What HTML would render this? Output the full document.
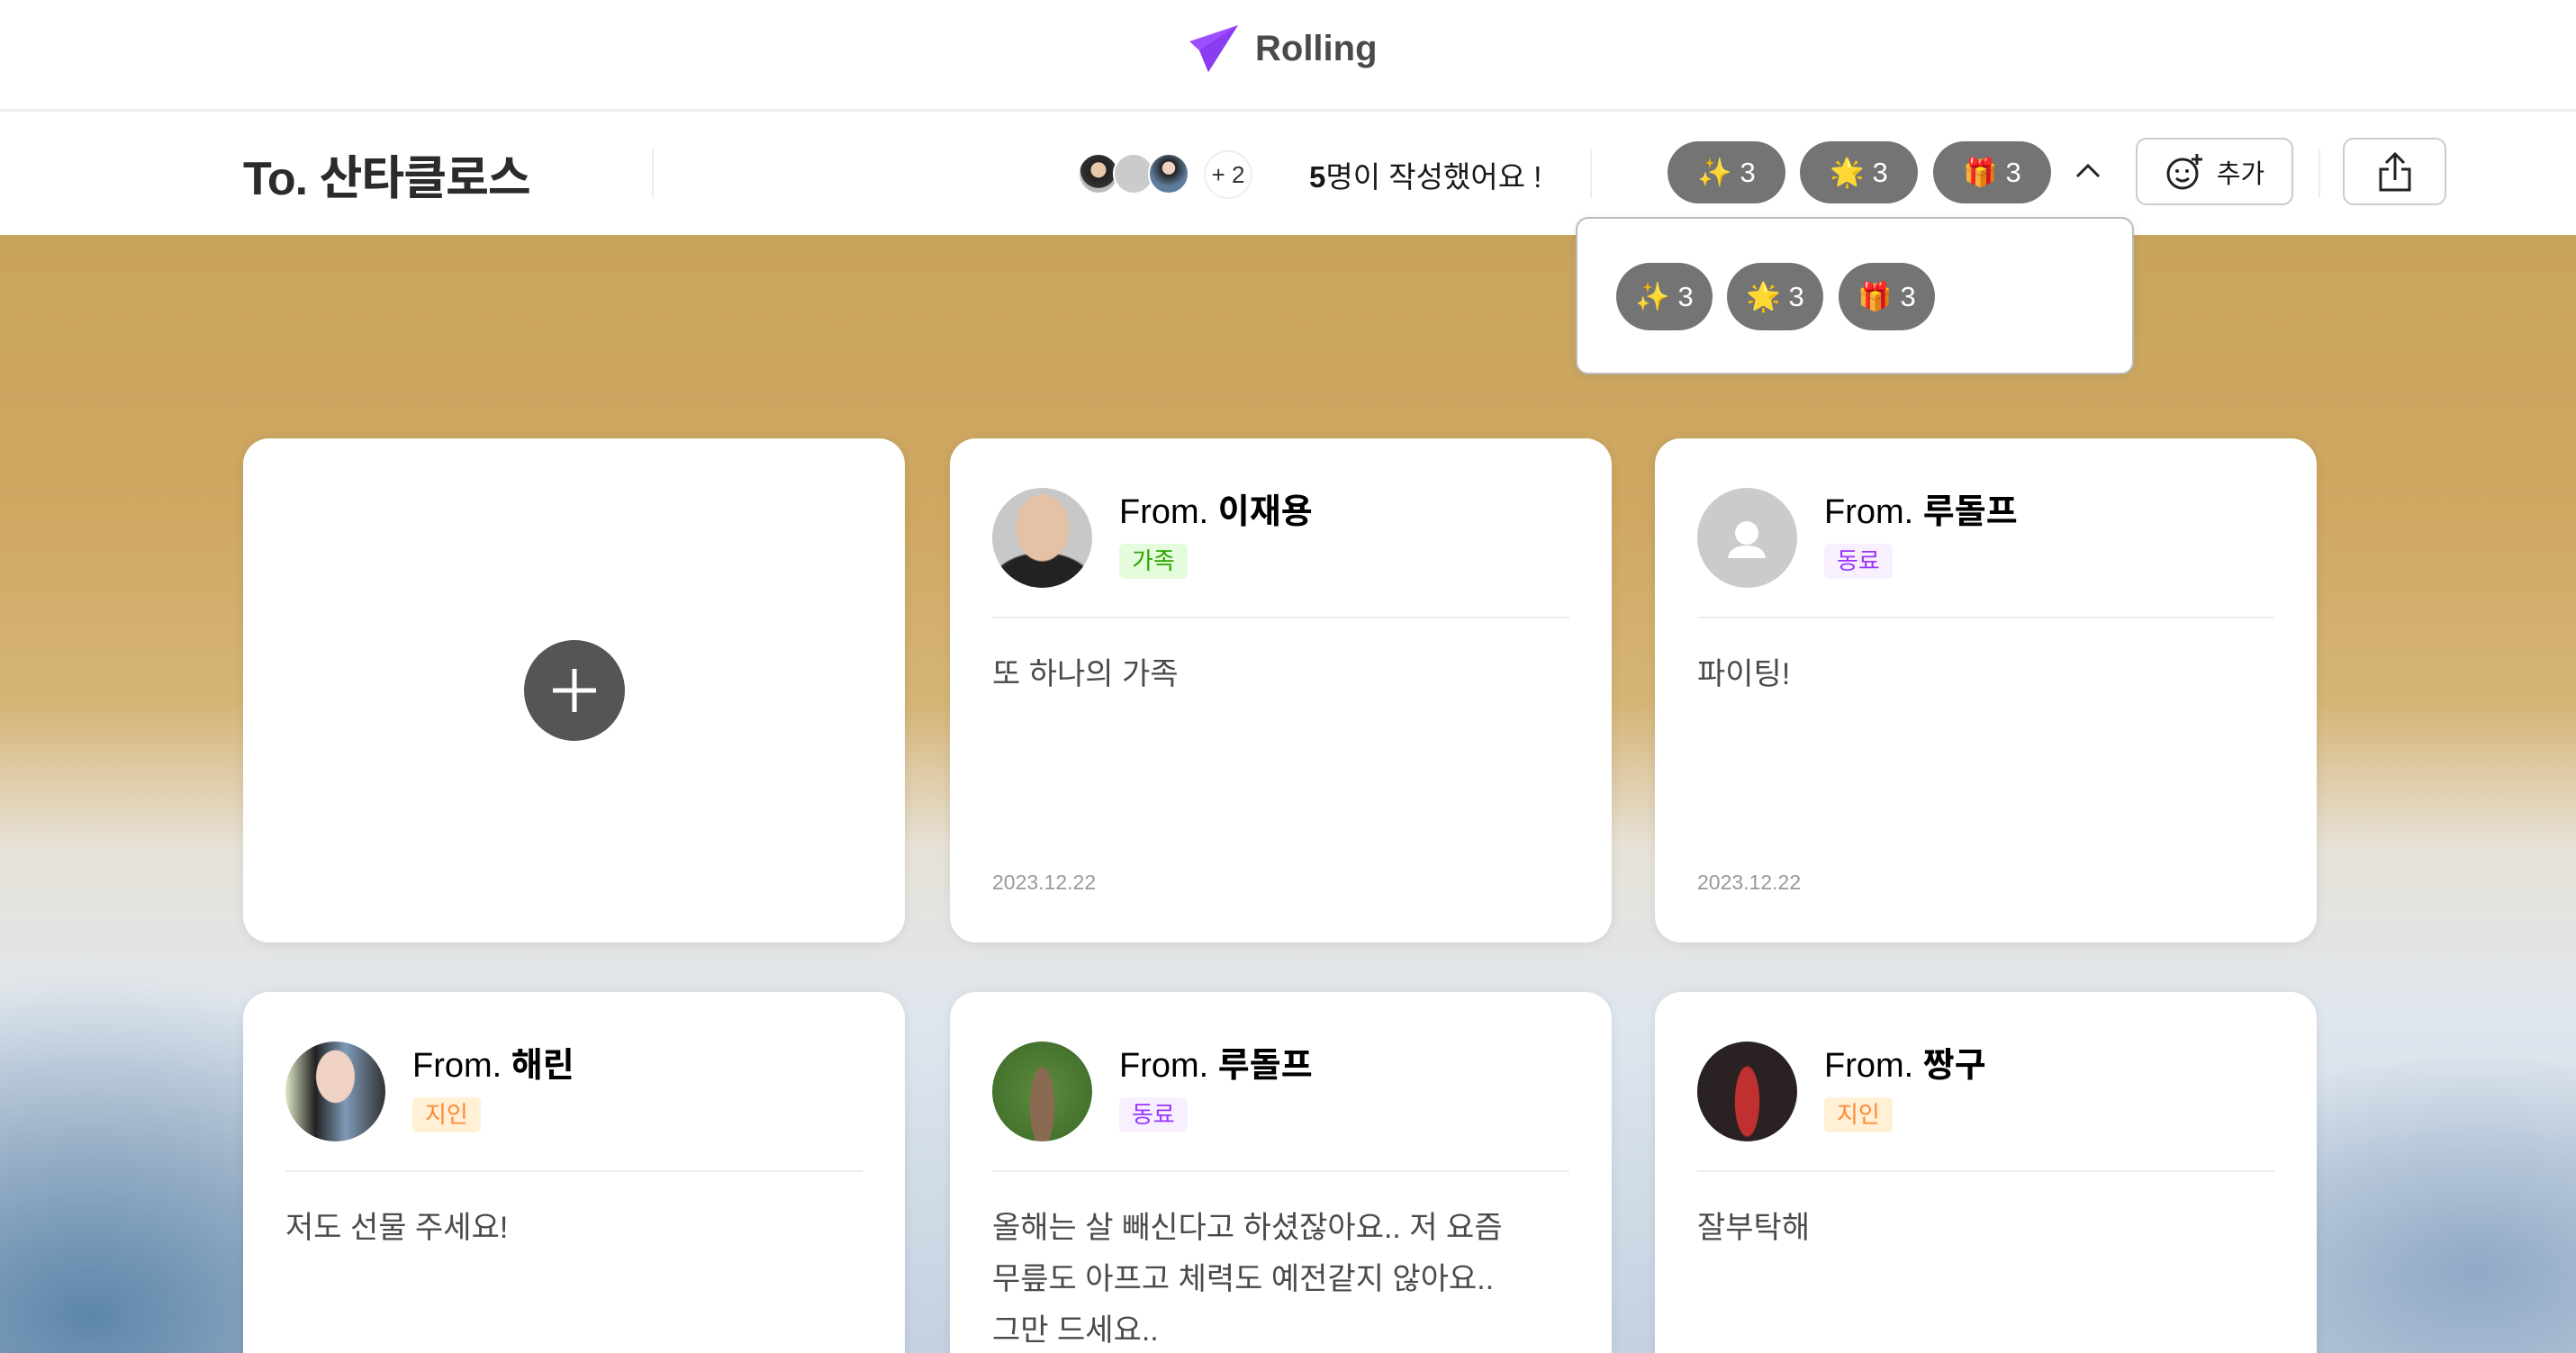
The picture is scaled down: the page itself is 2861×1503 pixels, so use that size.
<!DOCTYPE html>
<html><head><meta charset="utf-8"><style>
*{margin:0;padding:0;box-sizing:border-box}
html,body{width:2861px;height:1503px;overflow:hidden}
body{font-family:"Liberation Sans","Noto Sans CJK KR",sans-serif;background:#fff;position:relative}
.hdr{position:absolute;left:0;top:0;width:2861px;height:124px;border-bottom:3px solid #ededed;background:#fff}
.logo{position:absolute;left:1318px;top:26px;display:flex;align-items:center}
.logo span{font-size:40px;font-weight:bold;color:#4a4a4a;margin-left:18px}
.bar{position:absolute;left:0;top:124px;width:2861px;height:137px;background:#fff}
.title{position:absolute;left:270px;top:156px;font-size:52px;font-weight:bold;color:#2b2b2b;letter-spacing:-1px}
.vd{position:absolute;width:2px;background:#eee;top:165px;height:55px}
.av{position:absolute;top:170px;width:46px;height:46px;border-radius:50%;border:2px solid #fff}
.plus2{position:absolute;left:1337px;top:167px;width:54px;height:54px;border-radius:50%;border:2px solid #eee;background:#fff;font-size:26px;color:#333;text-align:center;line-height:50px}
.cnt{position:absolute;left:1454px;top:170px;font-size:33px;color:#181818}
.cnt b{font-weight:bold}
.badge{position:absolute;background:#747474;border-radius:40px;color:#fff;display:flex;align-items:center;justify-content:center;gap:8px}
.b1{top:157px;width:131px;height:69px;font-size:31px}
.b2{top:292px;width:107px;height:75px;font-size:31px}
.btn{position:absolute;top:153px;height:75px;border:2px solid #ccc;border-radius:12px;background:#fff;display:flex;align-items:center;justify-content:center;font-size:29px;color:#181818;gap:14px}
.drop{position:absolute;left:1750px;top:241px;width:620px;height:175px;background:#fff;border:2px solid #bbb;border-radius:14px;z-index:5;box-shadow:0 2px 10px rgba(0,0,0,.08)}
.bg{position:absolute;left:0;top:261px;width:2861px;height:1242px;overflow:hidden;
background:
radial-gradient(ellipse 700px 500px at 100px 1200px,#5d86aa 0%,rgba(120,150,180,.6) 40%,rgba(230,235,240,0) 75%),
radial-gradient(ellipse 500px 300px at 2750px 1150px,rgba(120,150,185,.7) 0%,rgba(220,228,236,0) 80%),
linear-gradient(180deg,#c9a45c 0%,#cfa862 25%,#d6b577 42%,#e7e2d8 55%,#dfe6ee 70%,#c3d1e0 100%)}
.card{position:absolute;width:735px;background:#fff;border-radius:29px;box-shadow:0 2px 12px rgba(0,0,0,.08);overflow:hidden}
.r1{top:487px;height:560px}
.r2{top:1102px;height:401px;border-radius:29px 29px 0 0}
.cav{position:absolute;left:47px;top:55px;width:111px;height:111px;border-radius:50%;overflow:hidden}
.from{position:absolute;left:188px;top:50px;font-size:38px;color:#000}
.from b{font-weight:bold}
.tag{position:absolute;left:188px;top:117px;height:39px;padding:0 14px;border-radius:6px;font-size:26px;line-height:39px}
.g{background:#e4fbdc;color:#2ba600}.p{background:#f8f0ff;color:#9935ff}.o{background:#fff0d6;color:#ff8832}
.line{position:absolute;left:47px;top:198px;width:641px;height:2px;background:#eee}
.msg{position:absolute;left:47px;top:234px;font-size:34px;color:#4a4a4a;line-height:57px;width:630px;word-break:keep-all}
.date{position:absolute;left:47px;top:480px;font-size:23px;color:#999}
</style></head><body>
<div class="hdr"><div class="logo"><svg width="58" height="56" viewBox="0 0 58 56"><path d="M57 2 L3 20 L14 30 L24 54 Z" fill="#9d4eff"/><path d="M57 2 L14 30 L24 54 Z" fill="#8a3cf0"/></svg><span>Rolling</span></div></div>
<div class="bar"></div>
<div class="title">To. 산타클로스</div>
<div class="vd" style="left:724px"></div>
<div class="av" style="left:1197px;background:radial-gradient(circle at 50% 40%,#e8c8a8 25%,#222 27%,#333 60%,#bbb 62%)"></div>
<div class="av" style="left:1236px;background:#cbcbcb"></div>
<div class="av" style="left:1275px;background:radial-gradient(circle at 50% 35%,#f0d0c0 20%,#222 22%,#5d7d9d 60%)"></div>
<div class="plus2">+ 2</div>
<div class="cnt"><b>5</b>명이 작성했어요 !</div>
<div class="vd" style="left:1766px"></div>
<div class="badge b1" style="left:1852px">✨ 3</div>
<div class="badge b1" style="left:1999px">🌟 3</div>
<div class="badge b1" style="left:2147px">🎁 3</div>
<svg style="position:absolute;left:2304px;top:180px" width="30" height="20" viewBox="0 0 30 20"><path d="M3 16 L15 4 L27 16" fill="none" stroke="#222" stroke-width="3"/></svg>
<div class="btn" style="left:2372px;width:175px"><svg width="44" height="44" viewBox="0 0 44 44"><circle cx="20" cy="24" r="16" fill="none" stroke="#222" stroke-width="3"/><circle cx="14" cy="21" r="2" fill="#222"/><circle cx="25" cy="21" r="2" fill="#222"/><path d="M13 29 Q20 35 27 29" fill="none" stroke="#222" stroke-width="3"/><path d="M36 2 V14 M30 8 H42" stroke="#222" stroke-width="3"/></svg>추가</div>
<div class="vd" style="left:2575px"></div>
<div class="btn" style="left:2602px;width:115px"><svg width="40" height="46" viewBox="0 0 40 46"><path d="M20 32 V4 M10 13 L20 3 L30 13" fill="none" stroke="#222" stroke-width="3"/><path d="M13 20 H4 V43 H36 V20 H27" fill="none" stroke="#222" stroke-width="3"/></svg></div>
<div class="drop"><div class="badge b2" style="left:43px;top:49px">✨ 3</div><div class="badge b2" style="left:166px;top:49px">🌟 3</div><div class="badge b2" style="left:290px;top:49px">🎁 3</div></div>
<div class="bg"></div>
<div class="card r1" style="left:270px"><div style="position:absolute;left:312px;top:224px;width:112px;height:112px;border-radius:50%;background:#555"><svg width="112" height="112" viewBox="0 0 112 112"><path d="M56 32 V80 M32 56 H80" stroke="#fff" stroke-width="5"/></svg></div></div>
<div class="card r1" style="left:1055px"><div class="cav" style="background:radial-gradient(ellipse 30px 38px at 50% 40%,#e5c2a5 95%,transparent 100%),radial-gradient(ellipse 60px 40px at 50% 100%,#222 95%,transparent 100%),#c8c8c8"></div><div class="from">From. <b>이재용</b></div><div class="tag g">가족</div><div class="line"></div><div class="msg">또 하나의 가족</div><div class="date">2023.12.22</div></div>
<div class="card r1" style="left:1838px"><div class="cav" style="background:#cbcbcb"><svg width="111" height="111" viewBox="0 0 111 111"><circle cx="55" cy="50" r="13" fill="#fff"/><path d="M34 78 Q36 64 55 64 Q74 64 76 78 Z" fill="#fff"/></svg></div><div class="from">From. <b>루돌프</b></div><div class="tag p">동료</div><div class="line"></div><div class="msg">파이팅!</div><div class="date">2023.12.22</div></div>
<div class="card r2" style="left:270px"><div class="cav" style="background:radial-gradient(ellipse 22px 30px at 50% 35%,#f0d2c4 95%,transparent 100%),linear-gradient(90deg,#dfe8c8,#222 30%,#7e9ab8 60%,#333)"></div><div class="from">From. <b>해린</b></div><div class="tag o">지인</div><div class="line"></div><div class="msg">저도 선물 주세요!</div></div>
<div class="card r2" style="left:1055px"><div class="cav" style="background:radial-gradient(ellipse 14px 45px at 50% 65%,#8a6a50 95%,transparent 100%),radial-gradient(circle,#5e8a3c,#3b6a28)"></div><div class="from">From. <b>루돌프</b></div><div class="tag p">동료</div><div class="line"></div><div class="msg">올해는 살 빼신다고 하셨잖아요.. 저 요즘<br>무릎도 아프고 체력도 예전같지 않아요..<br>그만 드세요..</div></div>
<div class="card r2" style="left:1838px"><div class="cav" style="background:radial-gradient(ellipse 14px 40px at 50% 60%,#c03030 95%,transparent 100%),#2a2222"></div><div class="from">From. <b>짱구</b></div><div class="tag o">지인</div><div class="line"></div><div class="msg">잘부탁해</div></div>
</body></html>
